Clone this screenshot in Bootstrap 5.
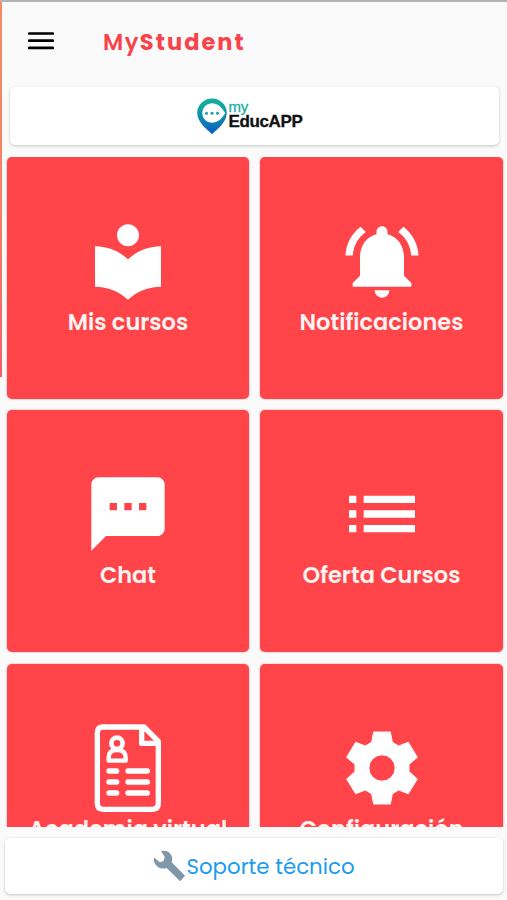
<!DOCTYPE html>
<html lang="es">
<head>
<meta charset="utf-8">
<meta name="viewport" content="width=device-width, initial-scale=1">
<title>MyStudent</title>
<link rel="stylesheet" href="https://cdn.jsdelivr.net/npm/bootstrap@5.3.0/dist/css/bootstrap.min.css">
<style>
body{background:#fafafa;font-family:Poppins,Inter,"Liberation Sans",sans-serif}
.app{height:900px;border-top:2px solid #b6b2b3}
.edge{top:0;left:0;width:2px;height:375px;background:linear-gradient(#f58a66,#f77f6a 60%,#f4606a)}
.topbar{height:85px;padding:0 0 7px 28px}
.menu-btn{width:26px;height:18px}
.brand-name{color:#f8434b;font-size:22.5px;line-height:30px;margin-left:49px;padding-top:2px;letter-spacing:1.5px}
.brand-name .fw-bold{letter-spacing:2.05px}
.panel{background:#fff;border-radius:5px;box-shadow:0 1px 3px rgba(0,0,0,.22)}
.logo-panel{height:58px;margin:0 8px 0 10px;padding-right:9px}
.logo-words{font-family:"Liberation Sans",sans-serif;margin-bottom:4px}
.logo-my{color:#18ada5;font-size:15px;line-height:14px;letter-spacing:-.1px;-webkit-text-stroke:.3px #18ada5}
.logo-app{color:#111;font-size:17px;line-height:15px;letter-spacing:-.35px;-webkit-text-stroke:.3px #111}
.tiles{margin-top:12px;height:670px;padding:0 4px 0 7px}
.tile-grid{display:grid;grid-template-columns:242px 243px;gap:11.4px 11px}
.tile{height:242px;background:#ff444a;border-radius:5px;box-shadow:0 0 2px rgba(220,60,65,.55);color:#fff}
.tile svg{width:88px;height:88px;margin-top:1px;fill:#fff}
.tile-label{height:35px;line-height:35px;font-size:22.5px;font-weight:600;white-space:nowrap;color:#fff3f2}
.support{height:56px;margin:11px 4px 0 5px;color:#1b9cf0;font-size:21.3px}
.support span{padding-top:2px}
</style>
<script src="https://cdn.jsdelivr.net/npm/bootstrap@5.3.0/dist/js/bootstrap.bundle.min.js"></script>
</head>
<body>
<div class="app position-relative overflow-hidden d-flex flex-column">
  <div class="edge position-absolute"></div>
  <header class="topbar d-flex align-items-center flex-shrink-0">
    <svg class="menu-btn" viewBox="0 0 26 18" aria-label="Menú"><path d="M1.2 1.5h23.6M1.2 8.7h23.6M1.2 15.9h23.6" stroke="#000" stroke-width="2.7" stroke-linecap="round"/></svg>
    <div class="brand-name"><span class="fw-semibold">My</span><span class="fw-bold">Student</span></div>
  </header>

  <div class="panel logo-panel d-flex align-items-center justify-content-center flex-shrink-0">
    <svg width="31" height="37" viewBox="0 0 31 37">
      <defs><linearGradient id="pin" x2="0" y2="1"><stop offset=".2" stop-color="#12aaa0"/><stop offset=".9" stop-color="#0b65bd"/></linearGradient></defs>
      <path fill="url(#pin)" d="M15 .5C7 .5.2 6.800.2 14.700c0 5 2.500 9 6 13.200L15 36.300l8.800-8.400c3.500-4.200 6-8.200 6-13.200C29.800 6.800 23 .5 15 .5z"/>
      <path fill="#fff" d="M15 5.200c5.600 0 9.300 3.500 13.300 9.900-4 6.500-7.700 9.700-13.300 9.700a9.800 9.800 0 0 1 0-19.600z"/>
      <g fill="#139fae"><circle cx="9.500" cy="15.300" r="1.500"/><circle cx="15" cy="15.300" r="1.500"/><circle cx="20.500" cy="15.300" r="1.500"/></g>
    </svg>
    <div class="logo-words d-flex flex-column"><span class="logo-my">my</span><span class="logo-app fw-bold">EducAPP</span></div>
  </div>

  <main class="tiles overflow-hidden flex-shrink-0">
    <div class="tile-grid">
      <div class="tile d-flex flex-column align-items-center justify-content-center">
        <svg viewBox="0 0 24 24"><path d="M12 11.550C9.640 9.350 6.480 8 3 8v11c3.480 0 6.640 1.350 9 3.550 2.360-2.190 5.520-3.550 9-3.550V8c-3.480 0-6.640 1.350-9 3.550zM12 8c1.660 0 3-1.340 3-3s-1.340-3-3-3-3 1.340-3 3 1.340 3 3 3z"/></svg>
        <div class="tile-label">Mis cursos</div>
      </div>
      <div class="tile d-flex flex-column align-items-center justify-content-center">
        <svg viewBox="0 0 24 24"><path d="M7.580 4.080L6.150 2.650C3.750 4.480 2.170 7.300 2.030 10.500h2c.15-2.650 1.510-4.970 3.550-6.420zm12.390 6.420h2c-.15-3.200-1.730-6.020-4.120-7.850l-1.420 1.430c2.020 1.450 3.390 3.770 3.540 6.420zM18 11c0-3.070-1.640-5.640-4.500-6.320V4c0-.83-.67-1.500-1.500-1.500s-1.500.67-1.500 1.500v.68C7.630 5.360 6 7.920 6 11v5l-2 2v1h16v-1l-2-2v-5zm-6 11c.14 0 .27-.01.4-.04.65-.14 1.180-.58 1.440-1.180.1-.24.15-.5.15-.78h-4c.01 1.100.9 2 2.010 2z"/></svg>
        <div class="tile-label">Notificaciones</div>
      </div>
      <div class="tile d-flex flex-column align-items-center justify-content-center">
        <svg viewBox="0 0 24 24"><path d="M20 2H4c-1.100 0-1.990.9-1.990 2L2 22l4-4h14c1.100 0 2-.9 2-2V4c0-1.100-.9-2-2-2zM9 11H7V9h2v2zm4 0h-2V9h2v2zm4 0h-2V9h2v2z"/></svg>
        <div class="tile-label">Chat</div>
      </div>
      <div class="tile d-flex flex-column align-items-center justify-content-center">
        <svg viewBox="0 0 24 24"><path d="M3 13h2v-2H3v2zm0 4h2v-2H3v2zm0-8h2V7H3v2zm4 4h14v-2H7v2zm0 4h14v-2H7v2zM7 7v2h14V7H7z"/></svg>
        <div class="tile-label">Oferta Cursos</div>
      </div>
      <div class="tile d-flex flex-column align-items-center justify-content-center">
        <svg viewBox="251 71 264 264"><g fill="none" stroke="#fff" stroke-linejoin="round" stroke-linecap="round" stroke-width="16"><path d="M308 80H431L474 123V309Q474 327 456 327H308Q291 327 291 309V98Q291 80 308 80zM424 82V129H472"/><circle cx="350" cy="129" r="17" stroke-width="14"/><path stroke-width="13" d="M325 181V171Q325 149 350 149Q376 149 376 171V181z"/><path d="M326 212H349M383 212H441M326 245H349M383 245H441M326 278H349M383 278H441"/></g></svg>
        <div class="tile-label">Academia virtual</div>
      </div>
      <div class="tile d-flex flex-column align-items-center justify-content-center">
        <svg viewBox="248 71 264 264"><path fill-rule="evenodd" stroke="#fff" stroke-width="3" stroke-linejoin="round" d="M355 95H405L411 126L430 137L459 126L486 171L461 192V214L486 236L459 280L430 269L411 280L405 311H355L349 280L330 269L301 280L274 236L299 214V192L274 171L301 126L330 137L349 126zM380 163.500a39.500 39.500 0 1 0 0 79 39.500 39.500 0 0 0 0-79z"/></svg>
        <div class="tile-label">Configuración</div>
      </div>
    </div>
  </main>

  <div class="panel support d-flex align-items-center justify-content-center flex-shrink-0">
    <svg width="33" height="33" viewBox="0 0 33 33"><path fill="#7f97a8" d="M8.200 1.200C12 .2 16 1.200 18 4.700c1.500 2.600 1.600 5 .7 7.600L32 25.800l-4.800 5.500L13.700 18c-3.200 1.200-7.200.7-9.900-2C.9 13.100.2 9.600 1.300 7.400l5.500 4.900 3.600-1 1.300-4.300z"/></svg>
    <span>Soporte técnico</span>
  </div>
</div>
</body>
</html>
